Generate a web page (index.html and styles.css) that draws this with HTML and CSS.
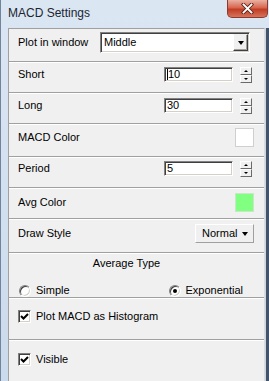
FILE: index.html
```html
<!DOCTYPE html>
<html>
<head>
    <title>MACD Settings</title>
    <link rel="stylesheet" href="styles.css">
</head>
<body>
    <div class="window">
        <!-- Title bar -->
        <div class="titlebar">
            <span class="title">MACD Settings</span>
            <div class="close-btn">
                <svg width="13" height="11" viewBox="0 0 13 11">
                    <path d="M2.5 1.5 L10.5 9.5 M10.5 1.5 L2.5 9.5" stroke="#5b2419" stroke-width="3.6" stroke-linecap="square"/>
                    <path d="M2.5 1.5 L10.5 9.5 M10.5 1.5 L2.5 9.5" stroke="#fff" stroke-width="1.8" stroke-linecap="square"/>
                </svg>
            </div>
        </div>

        <div class="frame">
            <div class="panel">
                <div class="row row-plot">
                    <span class="label tall">Plot in window</span>
                    <div class="combo">
                        <span class="combo-text">Middle</span>
                        <span class="combo-btn"><span class="arrow"></span></span>
                    </div>
                </div>

                <div class="row row-a">
                    <span class="label">Short</span>
                    <div class="spin">
                        <div class="field"><span class="caret"></span>10</div>
                        <div class="spin-btns">
                            <span class="spin-btn"><span class="tri up"></span></span>
                            <span class="spin-btn"><span class="tri down"></span></span>
                        </div>
                    </div>
                </div>

                <div class="row row-a">
                    <span class="label">Long</span>
                    <div class="spin">
                        <div class="field">30</div>
                        <div class="spin-btns">
                            <span class="spin-btn"><span class="tri up"></span></span>
                            <span class="spin-btn"><span class="tri down"></span></span>
                        </div>
                    </div>
                </div>

                <div class="row row-swatch">
                    <span class="label mid">MACD Color</span>
                    <div class="swatch"></div>
                </div>

                <div class="row row-b">
                    <span class="label">Period</span>
                    <div class="spin">
                        <div class="field">5</div>
                        <div class="spin-btns">
                            <span class="spin-btn"><span class="tri up"></span></span>
                            <span class="spin-btn"><span class="tri down"></span></span>
                        </div>
                    </div>
                </div>

                <div class="row row-c">
                    <span class="label mid">Avg Color</span>
                    <div class="swatch green"></div>
                </div>

                <div class="row row-draw">
                    <span class="label mid">Draw Style</span>
                    <div class="drop-btn">Normal <span class="arrow"></span></div>
                </div>

                <div class="row row-avg">
                    <div class="group-title">Average Type</div>
                    <div class="radios">
                        <span class="opt"><span class="radio"></span>Simple</span>
                        <span class="opt opt-right"><span class="radio checked"></span>Exponential</span>
                    </div>
                </div>

                <div class="row row-hist">
                    <span class="opt"><span class="check"><svg width="11" height="11" viewBox="0 0 11 11"><polyline points="2,5 4.5,7.5 9,3" fill="none" stroke="#000" stroke-width="2"/></svg></span>Plot MACD as Histogram</span>
                </div>

                <div class="row row-visible">
                    <span class="opt"><span class="check"><svg width="11" height="11" viewBox="0 0 11 11"><polyline points="2,5 4.5,7.5 9,3" fill="none" stroke="#000" stroke-width="2"/></svg></span>Visible</span>
                </div>
            </div>
            <div class="edge"></div>
        </div>
    </div>
</body>
</html>
```

FILE: styles.css
```css
/* Basic page setup */
body {
    margin: 0;
    font-family: "Liberation Sans", Arial, sans-serif;
    font-size: 11px;
    color: #000;
}

/* Window frame */
.window {
    width: 269px;
    height: 381px;
    display: flex;
    flex-direction: column;
    box-sizing: border-box;
    border-left: 1px solid #71849b;
    background: linear-gradient(#dbe6f3, #cbdaec);
    overflow: hidden;
}

.titlebar {
    height: 28px;
    display: flex;
    justify-content: space-between;
    align-items: flex-start;
}

.title {
    font-size: 12px;
    line-height: 26px;
    padding-left: 7px;
    color: #1b2530;
}

/* Red close button */
.close-btn {
    width: 41px;
    height: 18px;
    margin-right: 1px;
    box-sizing: border-box;
    border: 1px solid #8d3a2e;
    border-top: none;
    border-radius: 0 0 5px 5px;
    background: linear-gradient(#eab0a2, #d8664f 45%, #c13d24 55%, #d5735a);
    display: flex;
    align-items: center;
    justify-content: center;
}

.frame {
    flex: 1;
    display: flex;
    padding-left: 7px;
}

.edge {
    width: 4px;
    background: linear-gradient(to right, #c9d7e8 1px, #43536a 1px);
}

/* Gray settings panel */
.panel {
    flex: 1;
    display: flex;
    flex-direction: column;
    background-color: #f0f0f0;
    border-top: 1px solid #a0a0a0;
    border-left: 1px solid #a0a0a0;
    border-right: 1px solid #dcdcdc;
}

.row {
    display: flex;
    align-items: flex-start;
    justify-content: space-between;
    box-sizing: border-box;
    padding: 0 10px 0 9px;
    border-bottom: 1px solid #a0a0a0;
}

.row + .row {
    border-top: 1px solid #fff;
}

.row-plot { height: 33px; padding-top: 3px; }
.row-a { height: 31px; padding-top: 4px; }
.row-swatch { height: 33px; padding-top: 3px; }
.row-b { height: 31px; padding-top: 3px; }
.row-c { height: 31px; padding-top: 4px; }
.row-draw { height: 34px; padding-top: 4px; }
.row-avg { height: 45px; padding-top: 3px; flex-direction: column; align-items: stretch; }
.row-hist { height: 42px; padding-top: 11px; }
.row-visible { flex: 1; padding-top: 12px; border-bottom: none; }

.label { line-height: 15px; }
.label.tall { line-height: 21px; }
.label.mid { line-height: 19px; }

/* Sunken edit boxes */
.combo,
.field {
    box-sizing: border-box;
    background-color: #fff;
    border: 1px solid;
    border-color: #828282 #fff #fff #828282;
    box-shadow: inset 1px 1px 0 #404040, inset -1px -1px 0 #d4d0c8;
}

.combo {
    width: 150px;
    height: 21px;
    margin-right: 4px;
    display: flex;
    align-items: stretch;
    padding: 1px;
}

.combo-text {
    flex: 1;
    line-height: 17px;
    padding-left: 2px;
}

.combo-btn {
    width: 15px;
    box-sizing: border-box;
    background-color: #f0f0f0;
    border: 1px solid;
    border-color: #f0f0f0 #404040 #404040 #fff;
    box-shadow: inset -1px -1px 0 #a0a0a0;
    display: flex;
    align-items: center;
    justify-content: center;
}

.arrow {
    display: inline-block;
    width: 0;
    height: 0;
    border-left: 3.5px solid transparent;
    border-right: 3.5px solid transparent;
    border-top: 4px solid #000;
}

/* Number boxes with spinners */
.spin {
    display: flex;
    gap: 7px;
    margin-right: 2px;
}

.field {
    width: 69px;
    height: 15px;
    line-height: 13px;
    padding-left: 2px;
    display: flex;
    align-items: center;
}

.caret {
    width: 1px;
    height: 11px;
    background-color: #000;
    margin-right: 0;
}

.spin-btns {
    display: flex;
    flex-direction: column;
}

.spin-btn {
    width: 12px;
    height: 8px;
    box-sizing: border-box;
    background-color: #f0f0f0;
    border: 1px solid;
    border-color: #fff #6a6a6a #6a6a6a #fff;
    display: flex;
    align-items: center;
    justify-content: center;
}

.tri {
    width: 0;
    height: 0;
    border-left: 2px solid transparent;
    border-right: 2px solid transparent;
}

.tri.up { border-bottom: 2px solid #000; }
.tri.down { border-top: 2px solid #000; }

/* Color boxes */
.swatch {
    width: 19px;
    height: 19px;
    box-sizing: border-box;
    background-color: #fff;
    border: 1px solid #cfcfcf;
}

.swatch.green {
    background-color: #80ff80;
    border-color: #c6e8c6;
}

/* Draw style dropdown button */
.drop-btn {
    width: 59px;
    height: 19px;
    box-sizing: border-box;
    border: 1px solid;
    border-color: #fff #a0a0a0 #a0a0a0 #fff;
    padding-left: 6px;
    padding-right: 5px;
    display: flex;
    align-items: center;
    justify-content: space-between;
    line-height: 17px;
}

/* Average type radios */
.group-title {
    text-align: center;
    line-height: 13px;
    padding-right: 19px;
}

.radios {
    display: flex;
    margin-top: 6px;
}

.opt {
    display: flex;
    align-items: center;
    gap: 5px;
    line-height: 13px;
}

.opt-right {
    margin-left: auto;
    margin-right: 11px;
}

.radios .opt:first-child {
    margin-left: 1px;
}

.radio {
    position: relative;
    width: 12px;
    height: 12px;
    box-sizing: border-box;
    border-radius: 50%;
    border: 1px solid;
    border-color: #808080 #fff #fff #808080;
    background-color: #fff;
    box-shadow: inset 1px 1px 0 #404040, inset -1px -1px 0 #d4d0c8;
}

.radio.checked::after {
    content: "";
    position: absolute;
    left: 3px;
    top: 3px;
    width: 4px;
    height: 4px;
    border-radius: 50%;
    background-color: #000;
}

/* Checkboxes */
.check {
    width: 13px;
    height: 13px;
    box-sizing: border-box;
    border: 1px solid;
    border-color: #808080 #fff #fff #808080;
    background-color: #fff;
    box-shadow: inset 1px 1px 0 #404040, inset -1px -1px 0 #d4d0c8;
    display: flex;
    align-items: center;
    justify-content: center;
}
```
